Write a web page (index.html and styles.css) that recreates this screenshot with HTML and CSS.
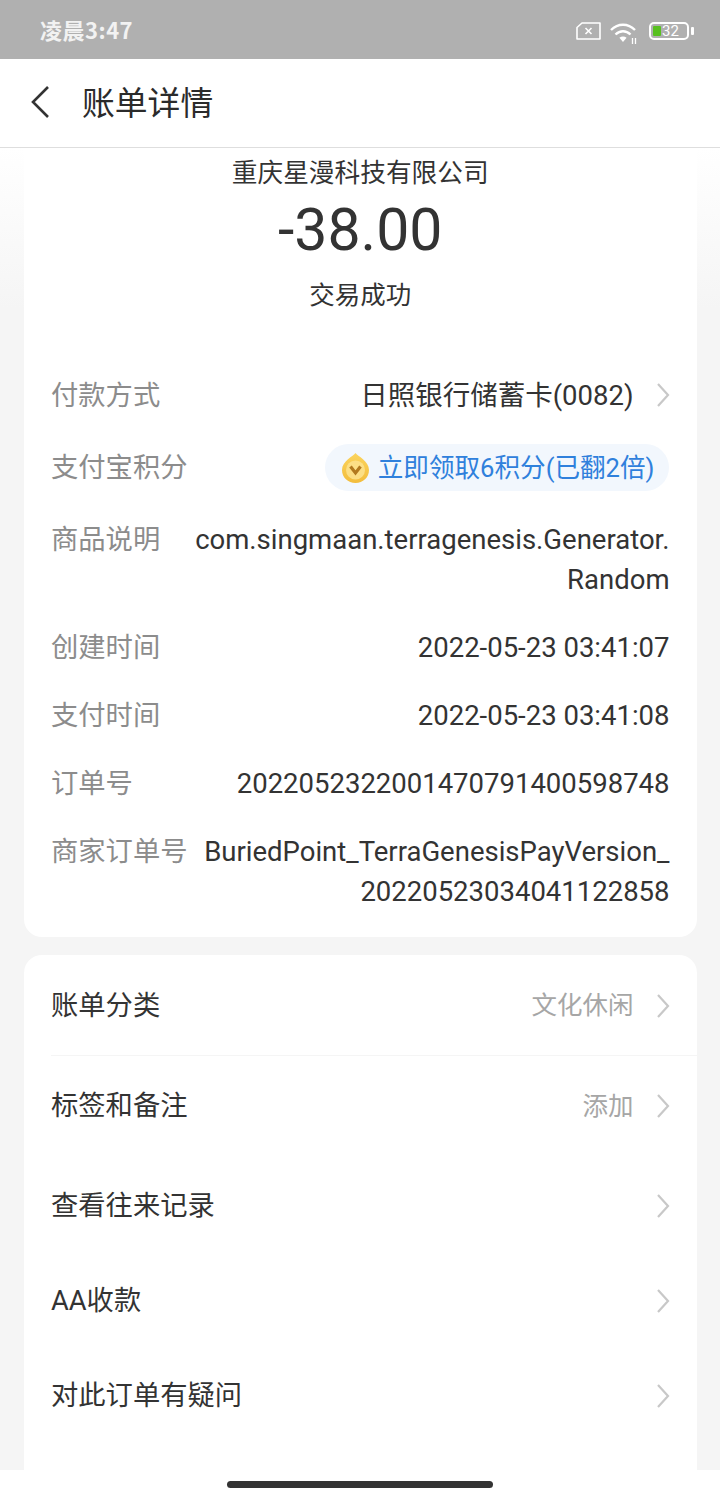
FILE: index.html
```html
<!DOCTYPE html>
<html lang="zh">
<head>
<meta charset="utf-8">
<title>账单详情</title>
<link rel="stylesheet" href="styles.css">
</head>
<body>
<div class="app">
  <div class="status">
    <span class="time">凌晨3:47</span>
    <div class="status-icons">
      <svg class="sim" viewBox="0 0 25 18" width="25" height="18"><path d="M6 1H24V17H1V5.500Z" fill="none" stroke="#fff" stroke-width="1.600" stroke-linejoin="round"/><path d="M9.500 6l6 6m0-6l-6 6" stroke="#fff" stroke-width="1.600"/></svg>
      <svg class="wifi" viewBox="0 0 28 22" width="28" height="22"><g fill="none" stroke="#fff" stroke-width="2.400"><path d="M1 8C8 1 18 1 25 8"/><path d="M5.500 12.500C10 8.200 16 8.200 20.500 12.500"/></g><path d="M13 20l-3.600-4.300C11.500 14 14.500 14 16.600 15.700z" fill="#fff"/><path d="M22.500 16v6M25.500 16v6" stroke="#fff" stroke-width="1.300"/></svg>
      <div class="battery"><span class="level"></span><span class="pct">32</span></div><span class="cap"></span>
    </div>
  </div>
  <header class="nav">
    <svg class="back" viewBox="0 0 20 34" width="20" height="34"><path d="M18 2L3 17L18 32" fill="none" stroke="#333" stroke-width="2.600"/></svg>
    <h1>账单详情</h1>
  </header>
  <main class="content">
    <section class="card summary">
      <div class="merchant">重庆星漫科技有限公司</div>
      <div class="amount">-38.00</div>
      <div class="result">交易成功</div>
      <dl class="details">
        <div class="row"><dt>付款方式</dt><dd class="with-arrow">日照银行储蓄卡(0082)<svg class="chev" viewBox="0 0 14 26" width="14" height="26"><path d="M2 2L12 13L2 24" fill="none" stroke="#c8c8c8" stroke-width="2.200"/></svg></dd></div>
        <div class="row pill-row"><dt>支付宝积分</dt><dd><span class="pill"><svg class="coin" viewBox="0 0 27 30" width="27" height="30"><defs><linearGradient id="coinFill" x1="0" y1="0" x2="0" y2="1"><stop offset="0" stop-color="#fbd45e"/><stop offset="1" stop-color="#f3bd3c"/></linearGradient></defs><path d="M13.500 0C15.500 3 27 8 27 17C27 24.500 21 30 13.500 30C6 30 0 24.500 0 17C0 8 11.500 3 13.500 0Z" fill="url(#coinFill)"/><circle cx="13.500" cy="17" r="9.500" fill="#fcdf85"/><path d="M8.500 13.500L13.500 20L18.500 13.500" fill="none" stroke="#b27a1e" stroke-width="3.200"/></svg>立即领取6积分(已翻2倍)</span></dd></div>
        <div class="row"><dt>商品说明</dt><dd>com.singmaan.terragenesis.Generator.<br>Random</dd></div>
        <div class="row"><dt>创建时间</dt><dd>2022-05-23 03:41:07</dd></div>
        <div class="row"><dt>支付时间</dt><dd>2022-05-23 03:41:08</dd></div>
        <div class="row"><dt>订单号</dt><dd>2022052322001470791400598748</dd></div>
        <div class="row"><dt>商家订单号</dt><dd>BuriedPoint_TerraGenesisPayVersion_<br>20220523034041122858</dd></div>
      </dl>
    </section>
    <section class="card actions">
      <div class="action first"><span>账单分类</span><span class="val">文化休闲<svg class="chev" viewBox="0 0 14 26" width="14" height="26"><path d="M2 2L12 13L2 24" fill="none" stroke="#c8c8c8" stroke-width="2.200"/></svg></span></div>
      <div class="action"><span>标签和备注</span><span class="val">添加<svg class="chev" viewBox="0 0 14 26" width="14" height="26"><path d="M2 2L12 13L2 24" fill="none" stroke="#c8c8c8" stroke-width="2.200"/></svg></span></div>
      <div class="action"><span>查看往来记录</span><span class="val"><svg class="chev" viewBox="0 0 14 26" width="14" height="26"><path d="M2 2L12 13L2 24" fill="none" stroke="#c8c8c8" stroke-width="2.200"/></svg></span></div>
      <div class="action short"><span>AA收款</span><span class="val"><svg class="chev" viewBox="0 0 14 26" width="14" height="26"><path d="M2 2L12 13L2 24" fill="none" stroke="#c8c8c8" stroke-width="2.200"/></svg></span></div>
      <div class="action"><span>对此订单有疑问</span><span class="val"><svg class="chev" viewBox="0 0 14 26" width="14" height="26"><path d="M2 2L12 13L2 24" fill="none" stroke="#c8c8c8" stroke-width="2.200"/></svg></span></div>
    </section>
  </main>
  <div class="home-bar"><span class="home-pill"></span></div>
</div>
</body>
</html>
```
FILE: styles.css
```css
* { box-sizing: border-box; }
html, body { margin: 0; padding: 0; height: 1499px; overflow: hidden; }
body { font-family: Roboto, "Noto Sans CJK SC", sans-serif; color: #333; background: #fff; }
.app { width: 720px; height: 1499px; display: flex; flex-direction: column; overflow: hidden; }
.status { height: 59px; flex: none; background: #b0b0b0; display: flex; align-items: center; justify-content: space-between; padding: 0 26px 2px 40px; }
.time { color: #f2f2f2; font-size: 22px; font-weight: 700; letter-spacing: .5px; font-family: "Noto Sans CJK SC", sans-serif; }
.status-icons { display: flex; align-items: center; margin-top: 5px; }
.sim { margin-right: 9px; }
.wifi { margin-right: 11px; margin-top: 3px; }
.battery { width: 40px; height: 18px; border: 2px solid #fff; border-radius: 5px; position: relative; display: flex; align-items: center; justify-content: center; }
.level { position: absolute; left: 2px; top: 2px; bottom: 2px; width: 8px; background: #58c020; border-radius: 1px; }
.pct { position: relative; color: #fff; font-size: 15px; line-height: 15px; margin-left: 3px; }
.cap { width: 3px; height: 8px; margin-left: 2px; background: #fff; border-radius: 1px; }
.nav { height: 89px; flex: none; display: flex; align-items: center; padding: 0 0 2px 30px; background: #fff; border-bottom: 1px solid #dedede; }
.back { margin-right: 32px; }
.nav h1 { margin: 0 0 4px; font-size: 32.800px; font-weight: 400; color: #2b2b2b; }
.content { flex: 1; min-height: 0; overflow: hidden; padding: 0 23.500px 0 24px; background: linear-gradient(#fff 0, #f5f5f5 160px); display: flex; flex-direction: column; gap: 18px; }
.card { background: #fff; flex: none; }
.summary { height: 789px; border-radius: 0 0 18px 18px; padding: 8px 27px 0; }
.merchant { text-align: center; font-size: 25.700px; line-height: 34px; }
.amount { text-align: center; font-size: 59px; line-height: 70px; margin-top: 5px; color: #333; }
.result { text-align: center; font-size: 25.500px; line-height: 40px; margin-top: 10px; }
.details { margin: 61px 0 0; display: flex; flex-direction: column; gap: 28px; }
.row { display: flex; justify-content: space-between; align-items: flex-start; font-size: 27.500px; line-height: 40px; }
.row dt { color: #8c8c8c; flex: none; white-space: nowrap; font-size: 27.300px; }
.row dd { margin: 0; text-align: right; color: #333; }
.with-arrow { display: flex; align-items: center; }
.with-arrow .chev { margin-top: -2px; }
.chev { margin-left: 22px; flex: none; }
.pill-row { height: 47px; align-items: center; margin-bottom: 1px; }
.pill { display: flex; align-items: center; height: 47px; margin-right: 1px; padding: 0 14px 0 17px; border-radius: 24px; background: #f2f7fd; color: #2f80dc; font-size: 25.600px; }
.coin { margin-right: 9px; }
.actions { height: 600px; border-radius: 18px 18px 0 0; }
.action { height: 100px; display: flex; align-items: center; justify-content: space-between; padding: 0 27px 6px; font-size: 27.300px; color: #333; }
.action.short { height: 90px; }
.action.first { position: relative; height: 101px; }
.action.first::after { content: ""; position: absolute; left: 27px; right: 0; bottom: 0; height: 1px; background: #f5f5f5; }
.val { display: flex; align-items: center; font-size: 25.500px; color: #a6a6a6; }
.action .chev { margin-top: 6px; }
.home-bar { height: 29px; flex: none; background: #fff; display: flex; justify-content: center; padding: 11px 1px 0 0; }
.home-pill { width: 266px; height: 7px; border-radius: 4px; background: #333; }
```
